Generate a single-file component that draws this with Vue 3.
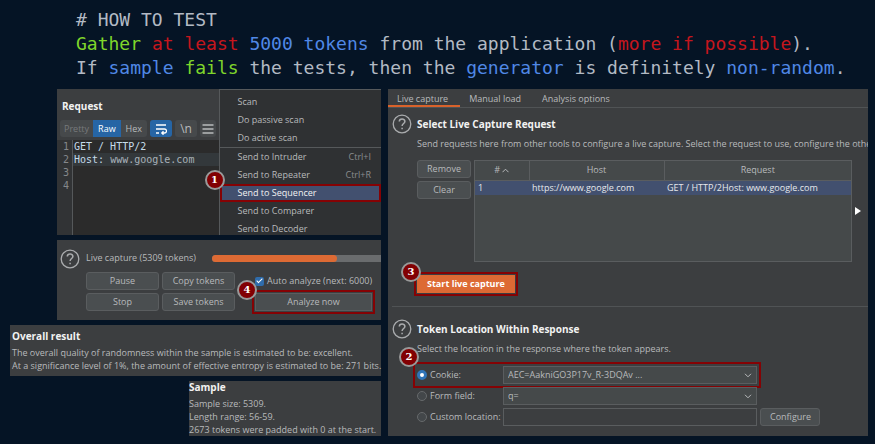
<template>
  <main class="page">
    <header class="intro">
      <p v-for="(line, i) in intro" :key="i"><span v-for="(part, j) in line" :key="j" :class="part[1]">{{ part[0] }}</span></p>
    </header>

    <div class="board">
      <div class="column">
        <section class="panel request">
          <div class="editor">
            <h2 class="request-title">Request</h2>
            <div class="toolbar">
              <div class="views">
                <button class="view disabled">Pretty</button>
                <button class="view active">Raw</button>
                <button class="view">Hex</button>
              </div>
              <button class="tool active" aria-label="Wrap lines">
                <svg width="12" height="12" viewBox="0 0 12 12" fill="none" stroke="currentColor" stroke-width="1.3">
                  <path d="M1 2h10M1 6h8.500a1.800 1.800 0 0 1 0 4H7M1 10h3M8.500 8.300L6.800 10l1.700 1.700" />
                </svg>
              </button>
              <button class="tool newline">\n</button>
              <button class="tool plain" aria-label="Menu">
                <svg width="12" height="12" viewBox="0 0 12 12" stroke="currentColor" stroke-width="1.3">
                  <path d="M0.500 2h11M0.500 6h11M0.500 10h11" />
                </svg>
              </button>
            </div>
            <div class="code">
              <div class="code-line"><span class="number">1</span><code>GET / HTTP/2</code></div>
              <div class="code-line current"><span class="number">2</span><code>Host: <span class="value">www.google.com</span></code></div>
              <div class="code-line"><span class="number">3</span></div>
              <div class="code-line"><span class="number">4</span></div>
            </div>
          </div>
          <div class="menu">
            <div v-for="item in menu" :key="item.text" class="menu-row" :class="{ divided: item.divided }">
              <button class="menu-item" :class="{ selected: item.selected }">
                <span>{{ item.text }}</span>
                <span class="shortcut">{{ item.shortcut }}</span>
              </button>
              <span v-if="item.selected" class="badge badge-menu">1</span>
            </div>
          </div>
        </section>

        <section class="panel capture">
          <svg class="help" width="20" height="20" viewBox="0 0 20 20" fill="none" stroke="currentColor">
            <circle cx="10" cy="10" r="8.800" stroke-width="1.300" />
            <path d="M7.300 7.600c0-3.700 5.600-3.500 5.600-.2 0 2-2.800 2.200-2.800 4.500M10.100 13.700v1.500" stroke-width="1.500" />
          </svg>
          <div class="capture-main">
            <div class="capture-head">
              <span>Live capture (5309 tokens)</span>
              <div class="progress" role="progressbar" :aria-valuenow="progress">
                <div class="progress-fill" :style="{ width: `${progress}%` }"></div>
              </div>
            </div>
            <div class="capture-actions">
              <button class="btn">Pause</button>
              <button class="btn">Copy tokens</button>
              <label class="check"><input v-model="autoAnalyze" type="checkbox">Auto analyze (next: 6000)</label>
              <button class="btn">Stop</button>
              <button class="btn">Save tokens</button>
              <div class="analyze">
                <button class="btn marked">Analyze now</button>
                <span class="badge badge-action">4</span>
              </div>
            </div>
          </div>
        </section>

        <section class="panel result">
          <h2>Overall result</h2>
          <p>The overall quality of randomness within the sample is estimated to be: excellent.</p>
          <p>At a significance level of 1%, the amount of effective entropy is estimated to be: 271 bits.</p>
        </section>

        <section class="panel sample">
          <h2>Sample</h2>
          <p>Sample size: 5309.</p>
          <p>Length range: 56-59.</p>
          <p>2673 tokens were padded with 0 at the start.</p>
        </section>
      </div>

      <section class="panel sequencer">
        <nav class="tabs">
          <button v-for="tab in tabs" :key="tab" class="tab" :class="{ current: tab === activeTab }" @click="activeTab = tab">{{ tab }}</button>
        </nav>

        <div class="block">
          <svg class="help" width="20" height="20" viewBox="0 0 20 20" fill="none" stroke="currentColor">
            <circle cx="10" cy="10" r="8.800" stroke-width="1.300" />
            <path d="M7.300 7.600c0-3.700 5.600-3.500 5.600-.2 0 2-2.800 2.200-2.800 4.500M10.100 13.700v1.500" stroke-width="1.500" />
          </svg>
          <div class="block-main">
            <h2>Select Live Capture Request</h2>
            <p class="hint">Send requests here from other tools to configure a live capture. Select the request to use, configure the other</p>
            <div class="requests">
              <div class="side">
                <button class="btn">Remove</button>
                <button class="btn">Clear</button>
              </div>
              <div class="table-box">
                <table>
                  <thead>
                    <tr>
                      <th class="col-id"># <svg width="7" height="5" viewBox="0 0 7 5" fill="none" stroke="currentColor"><path d="M0.500 4.200l3-3 3 3" /></svg></th>
                      <th class="col-host">Host</th>
                      <th>Request</th>
                    </tr>
                  </thead>
                  <tbody>
                    <tr>
                      <td>1</td>
                      <td>https://www.google.com</td>
                      <td>GET / HTTP/2Host: www.google.com</td>
                    </tr>
                  </tbody>
                </table>
              </div>
              <svg class="expand" width="6" height="8" viewBox="0 0 6 8"><path d="M0 0l6 4-6 4z" fill="#fff" /></svg>
            </div>
            <div class="start">
              <button class="btn primary marked">Start live capture</button>
              <span class="badge badge-start">3</span>
            </div>
          </div>
        </div>

        <hr>

        <div class="block">
          <svg class="help" width="20" height="20" viewBox="0 0 20 20" fill="none" stroke="currentColor">
            <circle cx="10" cy="10" r="8.800" stroke-width="1.300" />
            <path d="M7.300 7.600c0-3.700 5.600-3.500 5.600-.2 0 2-2.800 2.200-2.800 4.500M10.100 13.700v1.500" stroke-width="1.500" />
          </svg>
          <div class="block-main">
            <h2>Token Location Within Response</h2>
            <p class="hint">Select the location in the response where the token appears.</p>
            <div class="fields">
              <div class="field marked-row">
                <label><input v-model="location" type="radio" name="location" value="cookie">Cookie:</label>
                <div class="select">
                  <select aria-label="Cookie"><option>AEC=AakniGO3P17v_R-3DQAv ...</option></select>
                  <svg width="8" height="5" viewBox="0 0 8 5" fill="none" stroke="currentColor"><path d="M1 0.800l3 3 3-3" /></svg>
                </div>
                <span class="badge badge-cookie">2</span>
              </div>
              <div class="field">
                <label><input v-model="location" type="radio" name="location" value="form">Form field:</label>
                <div class="select">
                  <select aria-label="Form field"><option>q=</option></select>
                  <svg width="8" height="5" viewBox="0 0 8 5" fill="none" stroke="currentColor"><path d="M1 0.800l3 3 3-3" /></svg>
                </div>
              </div>
              <div class="field">
                <label><input v-model="location" type="radio" name="location" value="custom">Custom location:</label>
                <input class="text" type="text" aria-label="Custom location">
                <button class="btn">Configure</button>
              </div>
            </div>
          </div>
        </div>
      </section>
    </div>
  </main>
</template>

<script setup>
import { ref } from 'vue'

const intro = [
  [['# HOW TO TEST']],
  [
    ['Gather', 'green'], [' '], ['at least', 'red'], [' '], ['5000 tokens', 'blue'],
    [' from the application ('], ['more if possible', 'red'], [').']
  ],
  [
    ['If '], ['sample', 'blue'], [' '], ['fails', 'green'], [' the tests, then the '],
    ['generator', 'blue'], [' is definitely '], ['non-random', 'blue'], ['.']
  ]
]

const menu = [
  { text: 'Scan' },
  { text: 'Do passive scan' },
  { text: 'Do active scan' },
  { text: 'Send to Intruder', shortcut: 'Ctrl+I', divided: true },
  { text: 'Send to Repeater', shortcut: 'Ctrl+R' },
  { text: 'Send to Sequencer', selected: true },
  { text: 'Send to Comparer' },
  { text: 'Send to Decoder' }
]

const tabs = ['Live capture', 'Manual load', 'Analysis options']
const activeTab = ref('Live capture')
const autoAnalyze = ref(true)
const location = ref('cookie')
const progress = 74
</script>

<style>
body {
  margin: 0;
  background-color: #051425;
}
</style>

<style scoped>
* {
  box-sizing: border-box;
}

.page {
  padding: 8px 7px 7px 10px;
  font-family: 'Open Sans', 'Noto Sans', sans-serif;
  font-size: 9px;
  line-height: 14px;
  color: #b8babc;
}

h2,
p {
  margin: 0;
}

h2 {
  font-size: 10px;
  line-height: 18px;
  font-weight: 700;
  color: #f2f2f2;
}

button,
input,
select {
  margin: 0;
  padding: 0;
  border: 0;
  font: inherit;
  color: inherit;
  background: none;
}

.intro {
  padding: 0 0 9px 66px;
  font-family: 'DejaVu Sans Mono', monospace;
  font-size: 18px;
  line-height: 24px;
  color: #b3bac4;
  white-space: pre;
}

.green {
  color: #7fd62b;
}

.red {
  color: #c5161d;
}

.blue {
  color: #5088e6;
}

.board {
  display: grid;
  grid-template-columns: minmax(0, 371fr) minmax(0, 480fr);
  gap: 7px;
}

.column {
  display: flex;
  flex-direction: column;
  align-items: flex-end;
  gap: 5px;
}

.panel {
  background-color: #3c3e40;
}

.request,
.capture {
  align-self: stretch;
  margin-left: 47px;
}

/* The menu runs past the lower edge of the panel */
.request {
  display: flex;
  height: 146px;
}

.editor {
  flex: 1;
  display: flex;
  flex-direction: column;
  min-width: 0;
}

.request-title {
  padding: 8px 5px 5px;
}

.toolbar {
  display: flex;
  align-items: center;
  gap: 3px;
  padding: 0 3px 3px;
}

.views {
  display: flex;
  background-color: #46494b;
  border-radius: 3px;
}

.view {
  height: 17px;
  padding: 0 5px;
}

.view.disabled {
  padding: 0 4px;
  color: #77797b;
}

.active {
  background-color: #2665a5;
  color: #fff;
}

.tool {
  display: flex;
  align-items: center;
  justify-content: center;
  width: 22px;
  height: 17px;
  flex: none;
  border-radius: 3px;
}

.tool.newline {
  font-size: 12px;
  background-color: #46494b;
}

.tool.plain {
  flex: 1;
  background-color: #46494b;
}

.code {
  flex: 1;
  background: linear-gradient(to right, #313335 15px, #55585a 15px, #55585a 16px, #2b2b2b 16px);
  font-family: 'DejaVu Sans Mono', monospace;
  font-size: 10px;
  line-height: 13px;
}

.code-line {
  display: flex;
  height: 13px;
}

.code-line.current code {
  background-color: #33383b;
}

.number {
  width: 16px;
  padding-left: 6px;
  color: #85888b;
}

.code-line code {
  flex: 1;
  padding-left: 1px;
  font-family: inherit;
  color: #c6dcea;
}

.code-line .value {
  color: #a9b2b8;
}

.menu {
  flex: 1;
  padding-top: 3px;
  border: 1px solid #56595b;
  border-width: 1px 0 0 1px;
  background-color: #2f3133;
  clip-path: inset(0 0 0 -20px);
}

.menu-row {
  position: relative;
}

.menu-row.divided {
  border-top: 1px solid #56595b;
}

.menu-item {
  display: flex;
  justify-content: space-between;
  align-items: center;
  width: 100%;
  height: 18px;
  padding: 0 10px 0 18px;
}

.menu-item.selected {
  background-color: #42506f;
  color: #f2f2f2;
  box-shadow: inset 0 0 0 2px #850204;
}

.shortcut {
  color: #8a8c8e;
}

.badge {
  position: absolute;
  width: 20px;
  height: 20px;
  border: 2px solid #999;
  border-radius: 50%;
  background-color: #820003;
  color: #fff;
  font-family: 'DejaVu Serif', serif;
  font-size: 10px;
  font-weight: 700;
  line-height: 16px;
  text-align: center;
}

.badge-menu {
  top: -14px;
  left: -15px;
}

.badge-action {
  top: -13px;
  left: -18px;
}

.badge-start {
  top: -13px;
  left: -16px;
}

.badge-cookie {
  top: -19px;
  left: -18px;
}

.help {
  flex: none;
  color: #aaacae;
}

.capture {
  display: flex;
  gap: 6px;
  padding: 9px 0 9px 3px;
}

.capture-main {
  flex: 1;
}

.capture-head {
  display: flex;
  align-items: center;
  gap: 16px;
  padding: 2px 0 7px;
}

.progress {
  flex: 1;
  height: 7px;
  border-radius: 4px 0 0 4px;
  background-color: #6a6c6e;
}

.progress-fill {
  height: 100%;
  border-radius: 4px;
  background-color: #dd6a34;
}

.capture-actions {
  display: grid;
  grid-template-columns: 73px 73px 1fr;
  gap: 3px;
}

.btn {
  height: 18px;
  padding: 0 9px;
  border: 1px solid #5a5d5f;
  border-radius: 3px;
  background-color: #4a4e50;
  line-height: 14px;
  white-space: nowrap;
}

.check {
  display: flex;
  align-items: center;
  gap: 3px;
  margin-left: 17px;
  white-space: nowrap;
}

.check input {
  appearance: none;
  display: flex;
  justify-content: center;
  width: 9px;
  height: 9px;
  border-radius: 2px;
  background-color: #2f6cab;
}

.check input:checked::after {
  content: '';
  width: 2px;
  height: 5px;
  border: solid #fff;
  border-width: 0 1px 1px 0;
  transform: rotate(45deg);
}

.analyze {
  position: relative;
  display: flex;
  margin: 0 9px 0 17px;
}

.analyze .btn {
  flex: 1;
}

.marked {
  border-radius: 0;
  outline: 2px solid #850204;
  outline-offset: 1px;
}

.result {
  align-self: stretch;
  padding: 2px 2px 4px;
  line-height: 13px;
  white-space: nowrap;
}

.result h2 {
  padding-bottom: 1px;
}

.sample {
  width: 192px;
  line-height: 13px;
  white-space: nowrap;
}

.sample h2 {
  padding-bottom: 3px;
  line-height: 13px;
}

.tabs {
  display: flex;
  border-bottom: 1px solid #505355;
}

.tab {
  height: 18px;
  padding: 2px 12px 0 9px;
}

.tab.current {
  box-shadow: inset 0 -2px #d9622b;
}

.block {
  display: flex;
  gap: 5px;
  padding-left: 4px;
}

.block .help {
  margin-top: 6px;
}

.block-main {
  flex: 1;
  min-width: 0;
  padding-top: 7px;
}

.hint {
  padding: 4px 0 9px;
  overflow: hidden;
  white-space: nowrap;
}

.requests {
  display: flex;
  gap: 3px;
  padding-right: 7px;
}

.side {
  display: flex;
  flex-direction: column;
  gap: 3px;
  width: 54px;
}

.table-box {
  flex: 1;
  height: 102px;
  border: 1px solid #5a5d5f;
  background-color: #45494a;
}

table {
  width: 100%;
  border-collapse: collapse;
  table-layout: fixed;
}

th {
  height: 19px;
  padding: 0;
  border-bottom: 1px solid #5a5d5f;
  font-weight: 400;
}

th + th {
  border-left: 1px solid #5a5d5f;
}

.col-id {
  width: 54px;
}

.col-host {
  width: 135px;
}

td {
  height: 15px;
  padding: 0 3px;
  background-color: #42506f;
  color: #e6e8ec;
  white-space: nowrap;
}

.expand {
  align-self: center;
}

.start {
  position: relative;
  display: flex;
  width: max-content;
  margin: 13px 0;
}

.primary {
  border-color: #dd6a34;
  background-color: #dd6a34;
  color: #fff;
  font-weight: 700;
}

hr {
  margin: 0 0 6px 4px;
  border: 0;
  border-top: 1px solid #505355;
}

.fields {
  display: flex;
  flex-direction: column;
  gap: 3px;
  padding: 1px 0 9px;
}

.field {
  position: relative;
  display: grid;
  grid-template-columns: 83px minmax(0, 254px) 60px;
  column-gap: 3px;
  height: 18px;
}

.marked-row {
  align-self: flex-start;
  grid-template-columns: 83px 254px;
  outline: 2px solid #850204;
  outline-offset: 2px;
}

.field label {
  display: flex;
  align-items: center;
  gap: 3px;
  white-space: nowrap;
}

.field input[type='radio'] {
  appearance: none;
  flex: none;
  width: 10px;
  height: 10px;
  border: 1px solid #66696b;
  border-radius: 50%;
  background-color: #43474a;
}

.field input[type='radio']:checked {
  border: 3px solid #2f74b8;
  background-color: #fff;
}

.select {
  position: relative;
}

.select select,
.text {
  appearance: none;
  width: 100%;
  height: 18px;
  padding: 0 4px;
  border: 1px solid #5a5d5f;
  background-color: #45494a;
}

.select svg {
  position: absolute;
  top: 7px;
  right: 5px;
}

.text {
  background-color: #3c3e40;
}
</style>
